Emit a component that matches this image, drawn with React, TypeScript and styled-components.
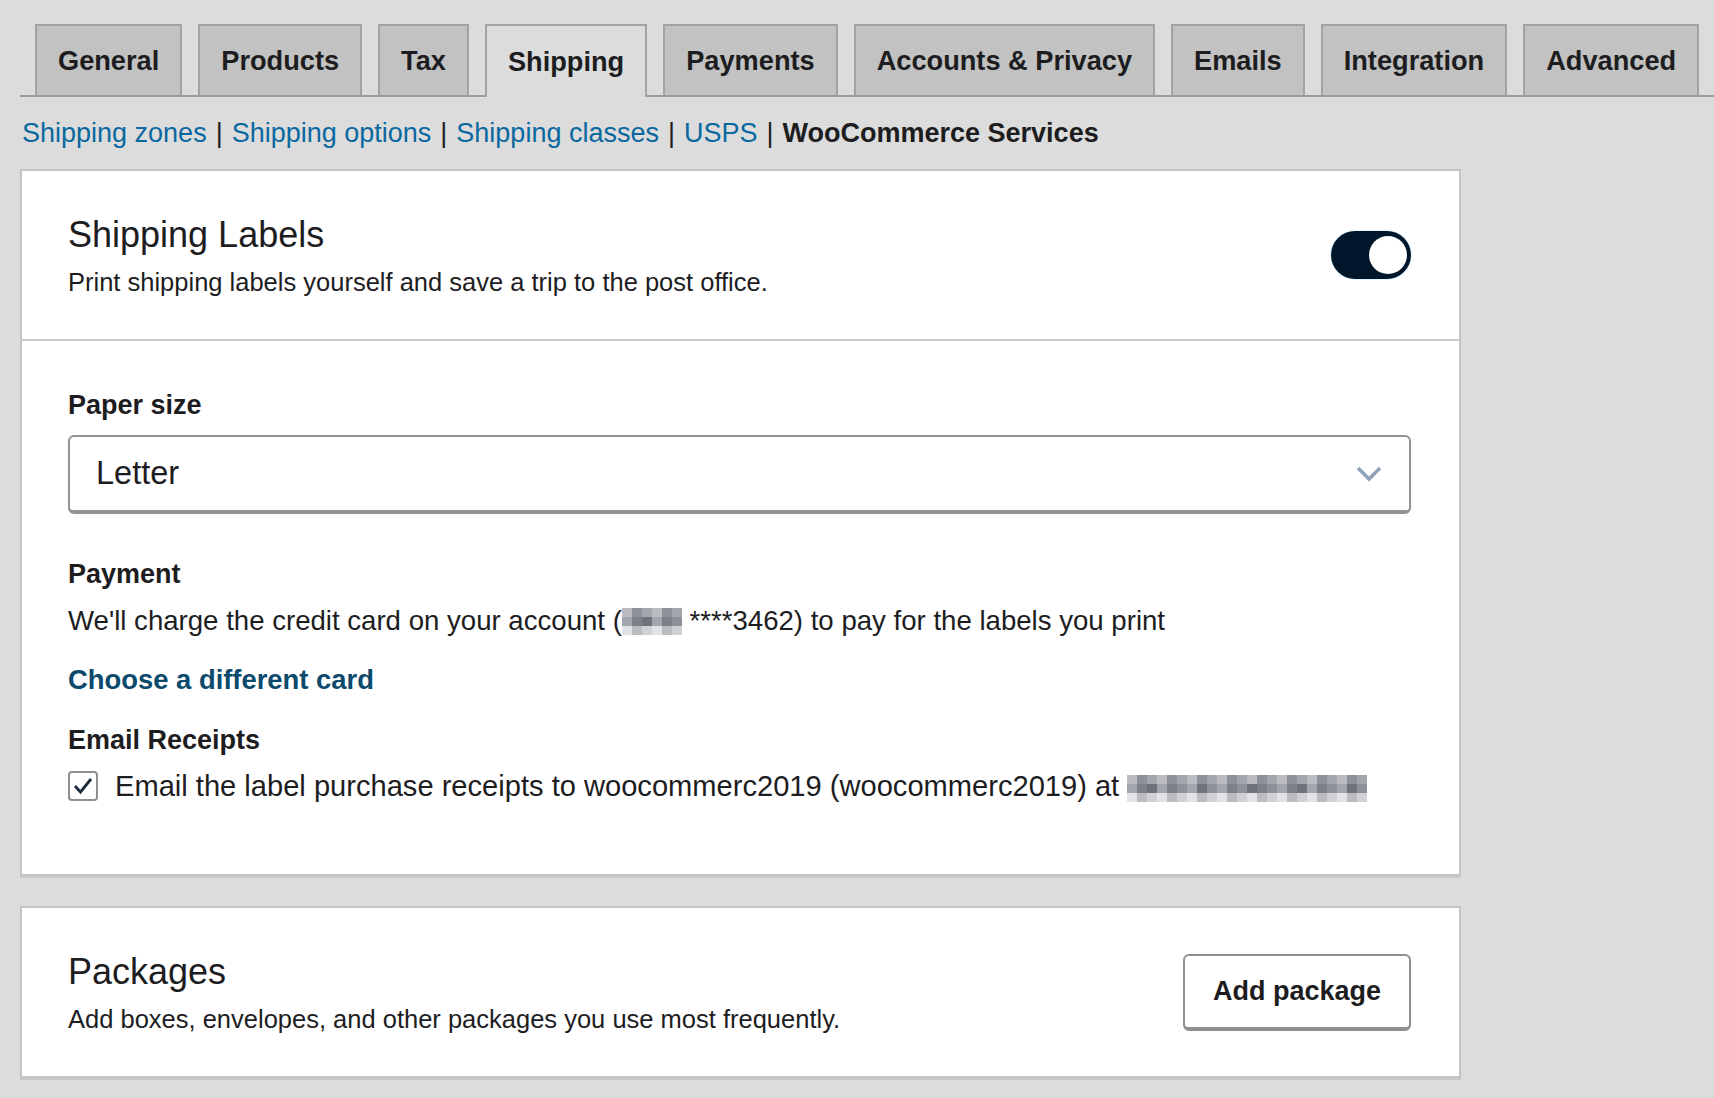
import styled, { createGlobalStyle } from "styled-components"

const GlobalStyle = createGlobalStyle`
  html, body {
    margin: 0;
    padding: 0;
    background: #dcdcdc;
  }
  body {
    font-family: "Liberation Sans", Arial, sans-serif;
    color: #1d1d1f;
  }
`

const Page = styled.div`
  padding: 24px 0 40px 20px;
  min-height: 1098px;
  box-sizing: border-box;
`

const TabBar = styled.nav`
  display: flex;
  align-items: flex-end;
  height: 71px;
  padding-left: 15px;
  border-bottom: 2px solid #9b9b9b;
`

const Tab = styled.a<{ $active?: boolean }>`
  display: flex;
  flex-shrink: 0;
  align-items: center;
  box-sizing: border-box;
  height: ${(p) => (p.$active ? "73px" : "71px")};
  margin: 0 16px ${(p) => (p.$active ? "-2px" : "0")} 0;
  padding: 0 21px;
  border: 2px solid #a3a3a3;
  border-bottom: none;
  background: ${(p) => (p.$active ? "#dcdcdc" : "#c2c2c2")};
  font-size: 27.2px;
  font-weight: 700;
  white-space: nowrap;
  color: #1d1d1f;
  cursor: pointer;
`

const SubNav = styled.div`
  display: flex;
  align-items: center;
  margin: 20px 0 20px 2px;
  font-size: 27px;
  line-height: 32px;
`

const SubLink = styled.a`
  color: #0a68a0;
  cursor: pointer;
`

const Current = styled.span`
  font-weight: 700;
  color: #1d1d1f;
`

const Sep = styled.span`
  margin: 0 9px;
  color: #1d1d1f;
`

const Card = styled.section<{ $gap?: number }>`
  width: 1441px;
  box-sizing: border-box;
  margin-top: ${(p) => p.$gap ?? 0}px;
  background: #fff;
  border: 2px solid #c4c4c4;
  box-shadow: 0 2px 0 #c8c8c8;
`

const CardHeader = styled.header<{ $divider?: boolean }>`
  display: flex;
  align-items: center;
  justify-content: space-between;
  padding: 42px 48px 42px 46px;
  border-bottom: ${(p) => (p.$divider ? "2px solid #c9c9c9" : "none")};
`

const Title = styled.h2`
  margin: 0;
  font-size: 36px;
  line-height: 44px;
  font-weight: 400;
  color: #1d1d1f;
`

const Subtitle = styled.p`
  margin: 10px 0 0;
  font-size: 25.5px;
  line-height: 30px;
  color: #1d1d1f;
`

const Toggle = styled.button`
  display: flex;
  align-items: center;
  justify-content: flex-end;
  width: 80px;
  height: 48px;
  padding: 0 4px;
  border: none;
  border-radius: 24px;
  background: #00172b;
  box-shadow: 0 0 0 1px #e3f6ff;
  cursor: pointer;
`

const Knob = styled.span`
  width: 38px;
  height: 38px;
  border-radius: 50%;
  background: #fff;
`

const CardBody = styled.div`
  padding: 48px 48px 72px 46px;
`

const FieldLabel = styled.div<{ $gap?: number }>`
  margin-top: ${(p) => p.$gap ?? 0}px;
  font-size: 27px;
  line-height: 32px;
  font-weight: 700;
  color: #1d1d1f;
`

const Select = styled.div`
  display: flex;
  align-items: center;
  justify-content: space-between;
  box-sizing: border-box;
  height: 79px;
  margin-top: 14px;
  padding: 0 26px 0 26px;
  border: 2px solid #939393;
  border-bottom-width: 4px;
  border-radius: 6px;
  font-size: 32.5px;
  color: #1d1d1f;
  cursor: pointer;
`

const BodyText = styled.div`
  display: flex;
  align-items: center;
  margin-top: 15px;
  font-size: 27.6px;
  line-height: 32px;
  white-space: pre;
`

const CardLink = styled.a`
  display: inline-block;
  margin-top: 27px;
  font-size: 27.4px;
  line-height: 32px;
  font-weight: 700;
  color: #0b4a6c;
  cursor: pointer;
`

const CheckRow = styled.label`
  display: flex;
  align-items: center;
  gap: 17px;
  margin-top: 14px;
  font-size: 29.1px;
  line-height: 32px;
  white-space: pre;
`

const Checkbox = styled.span`
  display: flex;
  align-items: center;
  justify-content: center;
  box-sizing: border-box;
  width: 30px;
  height: 30px;
  border: 2px solid #8c8f94;
  border-radius: 4px;
  background: #fff;
`

const Blur = styled.span<{ $cols: number }>`
  display: inline-grid;
  grid-template-columns: repeat(${(p) => p.$cols}, 10px);
  grid-auto-rows: 9px;
  vertical-align: middle;
`

const Cell = styled.span<{ $shade: string }>`
  background: ${(p) => p.$shade};
`

const Button = styled.button`
  box-sizing: border-box;
  height: 77px;
  padding: 0 28px;
  border: 2px solid #8f8f8f;
  border-bottom-width: 4px;
  border-radius: 6px;
  background: #fff;
  font-family: inherit;
  font-size: 27px;
  font-weight: 700;
  color: #1d1d1f;
  cursor: pointer;
`

const shades = ["#7d8089", "#8e9199", "#a3a6ad", "#babcc2", "#cfd1d6", "#e2e3e6", "#6f727b"]

const makeCells = (cols: number, seed: number) => {
  let s = seed
  const cells: string[] = []
  for (let r = 0; r < 3; r++) {
    for (let c = 0; c < cols; c++) {
      s = (s * 9301 + 49297) % 233280
      const base = r === 0 ? 1 : r === 1 ? 0 : 3
      const idx = Math.min(shades.length - 1, base + (s % 3))
      cells.push(r === 1 && s % 5 === 0 ? shades[6] : shades[idx])
    }
  }
  return cells
}

const Pixelated = ({ cols, seed }: { cols: number; seed: number }) => (
  <Blur $cols={cols}>
    {makeCells(cols, seed).map((shade, i) => (
      <Cell key={i} $shade={shade} />
    ))}
  </Blur>
)

const tabs = ["General", "Products", "Tax", "Shipping", "Payments", "Accounts & Privacy", "Emails", "Integration", "Advanced"]

const App = () => {
  return (
    <>
      <GlobalStyle />
      <Page>
        <TabBar>
          {tabs.map((t) => (
            <Tab key={t} $active={t === "Shipping"}>
              {t}
            </Tab>
          ))}
        </TabBar>

        <SubNav>
          <SubLink>Shipping zones</SubLink>
          <Sep>|</Sep>
          <SubLink>Shipping options</SubLink>
          <Sep>|</Sep>
          <SubLink>Shipping classes</SubLink>
          <Sep>|</Sep>
          <SubLink>USPS</SubLink>
          <Sep>|</Sep>
          <Current>WooCommerce Services</Current>
        </SubNav>

        <Card>
          <CardHeader $divider>
            <div>
              <Title>Shipping Labels</Title>
              <Subtitle>Print shipping labels yourself and save a trip to the post office.</Subtitle>
            </div>
            <Toggle aria-label="Enable shipping labels">
              <Knob />
            </Toggle>
          </CardHeader>

          <CardBody>
            <FieldLabel>Paper size</FieldLabel>
            <Select>
              <span>Letter</span>
              <svg width="28" height="18" viewBox="0 0 28 18">
                <polyline points="3,3 14,14 25,3" fill="none" stroke="#8fa0b8" strokeWidth="3.5" />
              </svg>
            </Select>

            <FieldLabel $gap={44}>Payment</FieldLabel>
            <BodyText>
              We'll charge the credit card on your account (<Pixelated cols={6} seed={7} /> ****3462) to pay for the labels you print
            </BodyText>
            <CardLink>Choose a different card</CardLink>

            <FieldLabel $gap={28}>Email Receipts</FieldLabel>
            <CheckRow>
              <Checkbox>
                <svg width="22" height="20" viewBox="0 0 22 20">
                  <polyline points="3,10 8.5,16 19,3" fill="none" stroke="#1b2a3d" strokeWidth="2.8" />
                </svg>
              </Checkbox>
              <span>
                Email the label purchase receipts to woocommerc2019 (woocommerc2019) at <Pixelated cols={24} seed={31} />
              </span>
            </CheckRow>
          </CardBody>
        </Card>

        <Card $gap={30}>
          <CardHeader>
            <div>
              <Title>Packages</Title>
              <Subtitle>Add boxes, envelopes, and other packages you use most frequently.</Subtitle>
            </div>
            <Button>Add package</Button>
          </CardHeader>
        </Card>
      </Page>
    </>
  )
}

export default App
